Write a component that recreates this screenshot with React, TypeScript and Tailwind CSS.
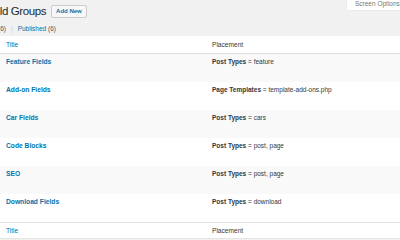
const rows = [
  { title: "Feature Fields", label: "Post Types", value: "feature" },
  { title: "Add-on Fields", label: "Page Templates", value: "template-add-ons.php" },
  { title: "Car Fields", label: "Post Types", value: "cars" },
  { title: "Code Blocks", label: "Post Types", value: "post, page" },
  { title: "SEO", label: "Post Types", value: "post, page" },
  { title: "Download Fields", label: "Post Types", value: "download" },
];

export default function App() {
  return (
    <div className="relative w-[400px] h-[240px] overflow-hidden bg-[#f1f1f1] font-['Liberation_Sans',Arial,sans-serif] text-[#32373c]">
      <div className="absolute top-0 right-0 w-[53px] h-[10px] bg-white shadow-[0_0_1px_rgba(0,0,0,0.15)] text-[6.5px] leading-[8px] text-[#72777c] pl-[8px] whitespace-nowrap">
        Screen Options
      </div>

      <div className="h-[22px] flex items-center gap-[5px] -ml-[15px]">
        <h1 className="text-[11.5px] tracking-[-0.4px] leading-[14px] text-[#23282d] whitespace-nowrap">Field Groups</h1>
        <button className="h-[13px] px-[4px] border border-[#ccc] rounded-[2px] bg-[#f7f7f7] text-[#0073aa] text-[6px] font-bold leading-[11px]">
          Add New
        </button>
      </div>

      <div className="h-[14px] flex items-center gap-[5px] text-[6.5px] -ml-[2px] whitespace-nowrap">
        <span className="text-[#555]">(6)</span>
        <span className="text-[#ccc]">|</span>
        <span>
          <span className="text-[#0073aa]">Published</span> <span className="text-[#555]">(6)</span>
        </span>
      </div>

      <div className="bg-white border-b border-[#e5e5e5]">
        <div className="h-[18px] flex items-center border-b border-[#e1e1e1] text-[6.6px]">
          <div className="w-[212px] pl-[6px] text-[#0073aa]">Title</div>
          <div className="text-[#32373c]">Placement</div>
        </div>
        {rows.map((row, i) => (
          <div
            key={row.title}
            className={`h-[28px] flex pt-[3px] leading-[10px] ${i % 2 === 0 ? "bg-[#f9f9f9]" : "bg-white"}`}
          >
            <div className="w-[212px] pl-[6px] text-[6.7px] font-bold text-[#0073aa]">{row.title}</div>
            <div className="text-[6.5px]">
              <span className="font-bold">{row.label}</span> = {row.value}
            </div>
          </div>
        ))}
        <div className="h-[16px] flex items-center border-t border-[#e1e1e1] text-[6.6px]">
          <div className="w-[212px] pl-[6px] text-[#0073aa]">Title</div>
          <div className="text-[#32373c]">Placement</div>
        </div>
      </div>
    </div>
  );
}
